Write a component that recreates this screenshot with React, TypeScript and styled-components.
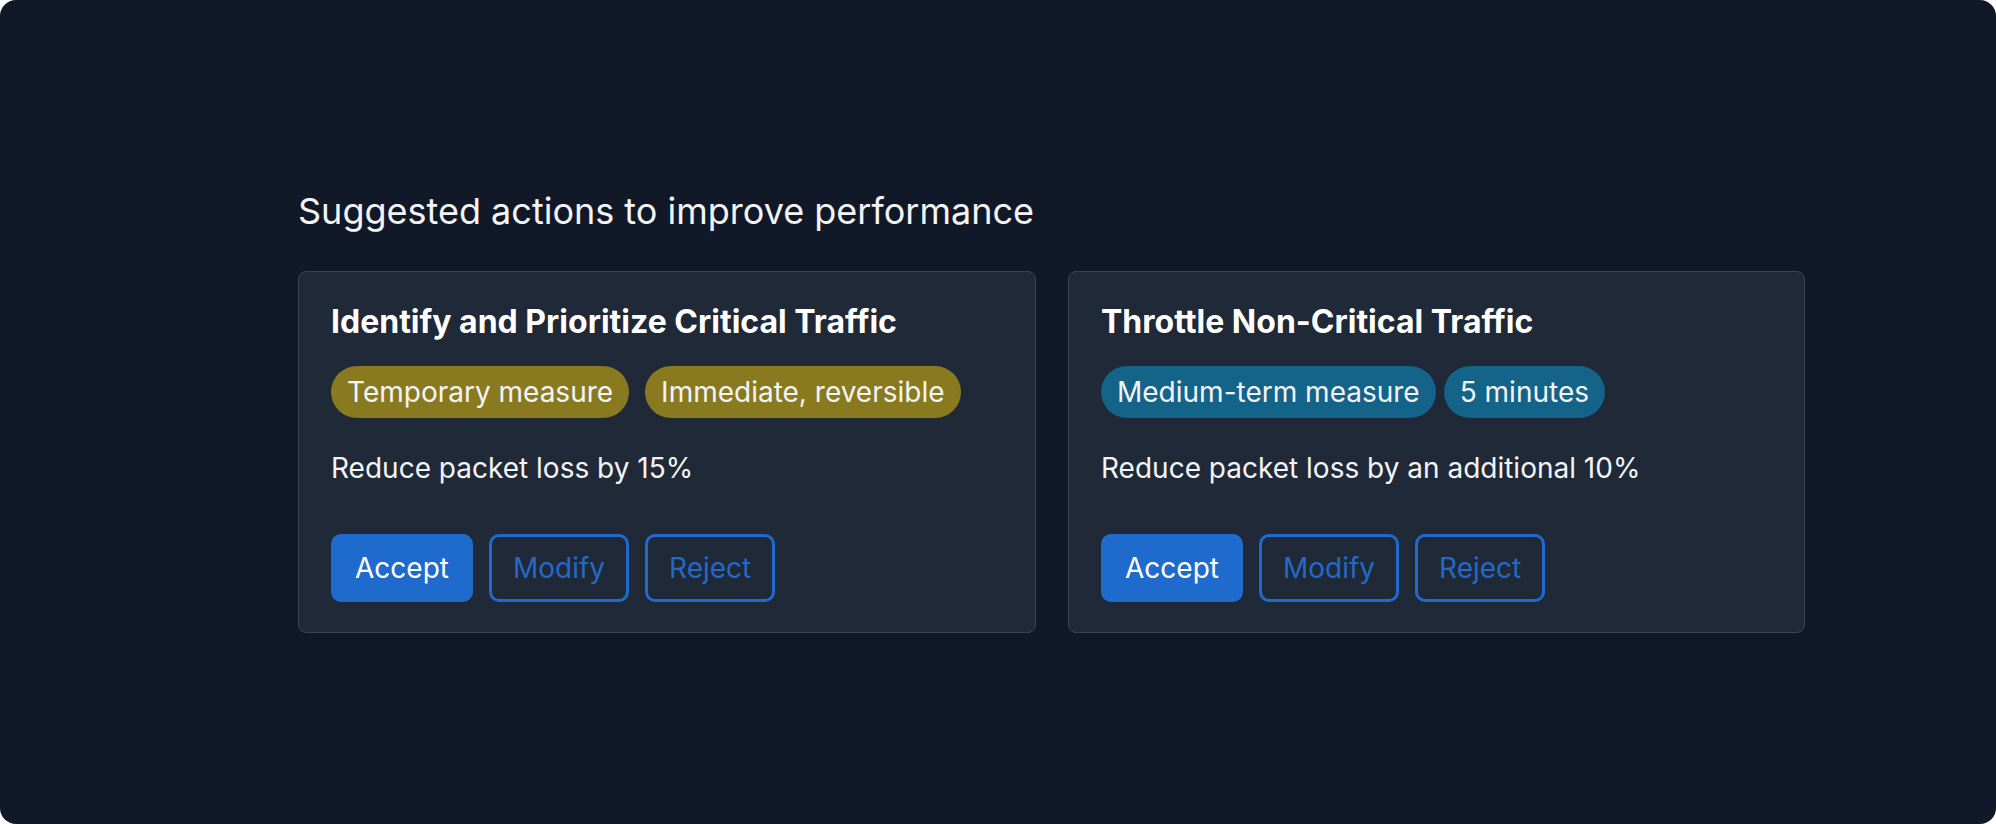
import React from "react";
import styled, { createGlobalStyle } from "styled-components";

const Global = createGlobalStyle`
  html, body { margin: 0; padding: 0; background: #ffffff; }
  body { font-family: Inter, "Noto Sans", sans-serif; -webkit-font-smoothing: antialiased; }
`;

const Frame = styled.div`
  width: 1996px;
  height: 824px;
  box-sizing: border-box;
  background: #111827;
  border-radius: 16px;
  padding: 190px 0 0 298px;
`;

const Heading = styled.h2`
  margin: 0 0 39px;
  font-size: 36px;
  line-height: 42px;
  font-weight: 400;
  color: #f3f4f6;
  letter-spacing: 0;
`;

const CardRow = styled.div`
  display: grid;
  grid-template-columns: 738px 737px;
  gap: 32px;
`;

const Card = styled.section`
  box-sizing: border-box;
  height: 362px;
  background: #1f2937;
  border: 1px solid #394354;
  border-radius: 8px;
  padding: 32px;
  display: flex;
  flex-direction: column;
`;

const Title = styled.h3`
  margin: 0;
  font-size: 32px;
  line-height: 36px;
  font-weight: 700;
  color: #ffffff;
`;

const BadgeRow = styled.div<{ $gap: number }>`
  display: flex;
  gap: ${(p) => p.$gap}px;
  margin-top: 26px;
`;

const Badge = styled.span<{ $tone: "yellow" | "blue" }>`
  display: inline-block;
  padding: 8px 16px;
  border-radius: 9999px;
  font-size: 28px;
  line-height: 36px;
  color: #f3f4f6;
  background: ${(p) => (p.$tone === "yellow" ? "#8a7a1f" : "#146389")};
`;

const Body = styled.p`
  margin: 29px 0 0;
  font-size: 28px;
  line-height: 42px;
  color: #f3f4f6;
`;

const Actions = styled.div`
  display: flex;
  gap: 16px;
  margin-top: 45px;
`;

const Button = styled.button<{ $primary?: boolean }>`
  box-sizing: border-box;
  height: 68px;
  padding: 0 21px;
  border-radius: 10px;
  border: 3px solid #1f6bcd;
  background: ${(p) => (p.$primary ? "#1f6bcd" : "transparent")};
  color: ${(p) => (p.$primary ? "#ffffff" : "#2469c8")};
  font-family: Inter, "Noto Sans", sans-serif;
  font-size: 28px;
  line-height: 42px;
  cursor: pointer;
`;

type Action = {
  title: string;
  tone: "yellow" | "blue";
  badgeGap: number;
  badges: string[];
  body: string;
};

const actions: Action[] = [
  {
    title: "Identify and Prioritize Critical Traffic",
    tone: "yellow",
    badgeGap: 16,
    badges: ["Temporary measure", "Immediate, reversible"],
    body: "Reduce packet loss by 15%",
  },
  {
    title: "Throttle Non-Critical Traffic",
    tone: "blue",
    badgeGap: 8,
    badges: ["Medium-term measure", "5 minutes"],
    body: "Reduce packet loss by an additional 10%",
  },
];

export default function App() {
  return (
    <>
      <Global />
      <Frame>
        <Heading>Suggested actions to improve performance</Heading>
        <CardRow>
          {actions.map((a) => (
            <Card key={a.title}>
              <Title>{a.title}</Title>
              <BadgeRow $gap={a.badgeGap}>
                {a.badges.map((b) => (
                  <Badge key={b} $tone={a.tone}>
                    {b}
                  </Badge>
                ))}
              </BadgeRow>
              <Body>{a.body}</Body>
              <Actions>
                <Button $primary>Accept</Button>
                <Button>Modify</Button>
                <Button>Reject</Button>
              </Actions>
            </Card>
          ))}
        </CardRow>
      </Frame>
    </>
  );
}
